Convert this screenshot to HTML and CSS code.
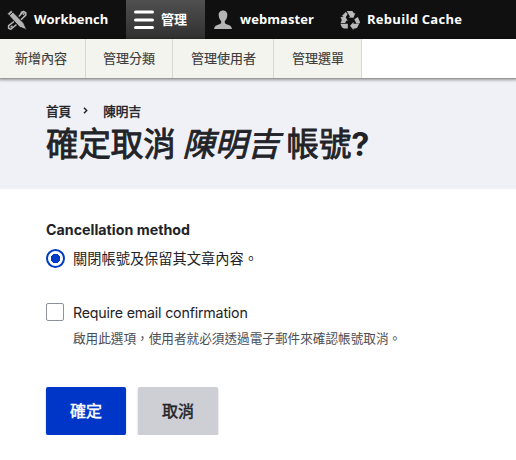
FILE: index.html
```html
<!DOCTYPE html>
<html lang="zh-Hant">
<head>
<meta charset="utf-8">
<title>確定取消帳號</title>
<link rel="stylesheet" href="styles.css">
</head>
<body>
<nav class="toolbar">
  <a class="tab workbench"><svg class="icon" viewBox="0 0 20 20"><g fill="none" stroke="#b5b5b5" stroke-width="1.500"><path d="M7 11.500L1.600 15.700v2.500l2.200 1.100L9.500 14.500"/><path d="M11.800 6.500L16.600 1.500l2.200 1.200v2.400L14 9.800M13.200 5.200l1.500-3 2-.8M16 4.800l1.500-1.500M3.500 17.500l2-1.700"/></g><path d="M.4 3.800L4.100.3l12.500 12.800 3.100 6.600-7-2.600z" fill="#b5b5b5" stroke="#101010" stroke-width=".8"/><path d="M2.200 5.600l3.700-3.500" stroke="#101010"/></svg><span>Workbench</span></a>
  <a class="tab manage"><svg class="icon" viewBox="0 0 20 20"><path d="M1.500 2h17M1.500 10h17M1.500 17.500h17" stroke="#fff" stroke-width="3" stroke-linecap="round"/></svg><span>管理</span></a>
  <a class="tab user"><svg class="icon" viewBox="0 0 20 20"><path fill="#b5b5b5" d="M10 .4C13 .4 14.6 2.6 14.3 5.300c-.2 2.400-.9 4.300-2.400 5.600-.5 1.600 0 2.800 1.700 3.400 3 .8 5.100 1.900 5.400 4.800H1c.3-2.900 2.400-4 5.400-4.800 1.700-.6 2.200-1.800 1.700-3.400C6.600 9.600 5.900 7.700 5.700 5.300 5.400 2.600 7 .4 10 .4z"/></svg><span>webmaster</span></a>
  <a class="tab cache"><svg class="icon" viewBox="0 0 20 20"><g fill="#b9b9b9"><path d="M6.600 1h5.700l1.900 2.400 1.300-.7-2 5.100-5-.2 1.500-.9L8.200 3.600z"/><path d="M5.700 1.900l2 2.100-2.300 3.800-3.600-1.900z"/><path d="M.5 7.300l5-.5 2.300 4.400-1.400-.6-1.300 2.500H.6l1.200-3.200z"/><path d="M.5 13.700h7.300v4.700H4.200c-1.300 0-2.200-.8-2.700-1.900z"/><path d="M14.300 9.300l3.500-2.200 1.900 4.200c.4.900.2 1.600-.2 2.300h-3.100z"/><path d="M10 15.800l3.500-3.700v1.700h5.700l-1.800 3.500c-.5.800-1 1.100-2 1.100h-1.900v1.500z"/></g></svg><span>Rebuild Cache</span></a>
</nav>
<nav class="tray"><a>新增內容</a><a>管理分類</a><a class="wide">管理使用者</a><a class="wide">管理選單</a></nav>
<header class="page-header">
  <div class="breadcrumb"><span>首頁</span><svg class="chevron" viewBox="0 0 5 7"><path d="M1 .7l2.700 2.800L1 6.300" fill="none" stroke="#222330" stroke-width="1.500"/></svg><span>陳明吉</span></div>
  <h1>確定取消 <em>陳明吉</em> 帳號<span class="mark">?</span></h1>
</header>
<main class="content">
  <h2>Cancellation method</h2>
  <label class="option"><span class="radio"></span><span>關閉帳號及保留其文章內容。</span></label>
  <label class="option confirm"><span class="checkbox"></span><span>Require email confirmation</span></label>
  <p class="description">啟用此選項，使用者就必須透過電子郵件來確認帳號取消。</p>
  <div class="actions"><button class="primary">確定</button><button>取消</button></div>
</main>
</body>
</html>
```

FILE: styles.css
```css
* { box-sizing: border-box; }
body {
  margin: 0;
  background: #fff;
  color: #222328;
  font-family: Inter, "Noto Sans CJK TC", sans-serif;
  font-size: 14.22px;
}
.toolbar {
  display: flex;
  height: 39px;
  background: #101010;
  color: #fff;
  font: bold 13px/39px "Open Sans", "Noto Sans CJK TC", sans-serif;
}
.tab { display: flex; align-items: center; white-space: nowrap; }
.icon { width: 20px; height: 20px; flex: none; }
.workbench { width: 126px; padding-left: 7px; gap: 7px; }
.manage { width: 79px; padding-left: 8px; gap: 7px; background: linear-gradient(#505050, #303030); }
.user { width: 127px; padding-left: 8px; gap: 7px; }
.user span { letter-spacing: .08px; }
.cache { padding-left: 8px; gap: 7px; letter-spacing: .28px; }
.tray {
  display: flex;
  position: relative;
  height: 39px;
  background: #fff;
  box-shadow: 0 1px 0 #999, 0 1px 3px 1px rgba(0, 0, 0, .38);
  color: #3c3c3c;
  font: 13px/38px "Open Sans", "Noto Sans CJK TC", sans-serif;
  -webkit-text-stroke: .15px currentColor;
}
.tray a { padding: 0 17px; background: #f3f4ee; border-right: 1px solid #d8d8d5; }
.tray a:first-child { padding-left: 15px; padding-right: 18px; }
.tray .wide { padding-left: 18px; }
.page-header { height: 111px; padding: 23px 46px 0; background: #f0f1f6; }
.breadcrumb { display: flex; align-items: center; height: 19px; font-size: 12.64px; -webkit-text-stroke: .45px currentColor; }
.chevron { width: 5px; height: 7px; margin: 0 15px 0 12px; }
h1 {
  margin: 2px 0 0;
  font-size: 32.4px;
  line-height: 46px;
  font-weight: 400;
  white-space: nowrap;
  word-spacing: -2.2px;
  -webkit-text-stroke: .9px currentColor;
}
.mark { font-weight: 700; -webkit-text-stroke: 0; }
.content { padding: 31px 46px 0; }
h2 { margin: 0; font-size: 14.22px; line-height: 20px; font-weight: 700; letter-spacing: .02px; }
.option { display: flex; align-items: center; height: 20px; margin-top: 8px; gap: 9px; }
.radio, .checkbox { width: 18px; height: 18px; flex: none; border: 1px solid #8e929c; border-radius: 2px; }
.radio { width: 19px; height: 19px; margin-right: -1px; border: 2px solid #003cc5; border-radius: 50%; background: radial-gradient(circle, #003cc5 4.5px, #fff 5px); }
.confirm { margin-top: 34px; letter-spacing: -.19px; }
.description { margin: 7px 0 0 27px; color: #4c4d52; font-size: 12.64px; line-height: 19px; white-space: nowrap; }
.actions { display: flex; gap: 12px; margin-top: 39px; }
button {
  width: 80px;
  height: 48px;
  padding: 0;
  border: 0;
  border-radius: 2px;
  background: #cecfd4;
  color: #222328;
  font: 16px/48px Inter, "Noto Sans CJK TC", sans-serif;
  -webkit-text-stroke: .45px currentColor;
  box-shadow: 0 1px 2px rgba(0, 0, 0, .25);
}
.primary { background: #0036c8; color: #fff; }
```
